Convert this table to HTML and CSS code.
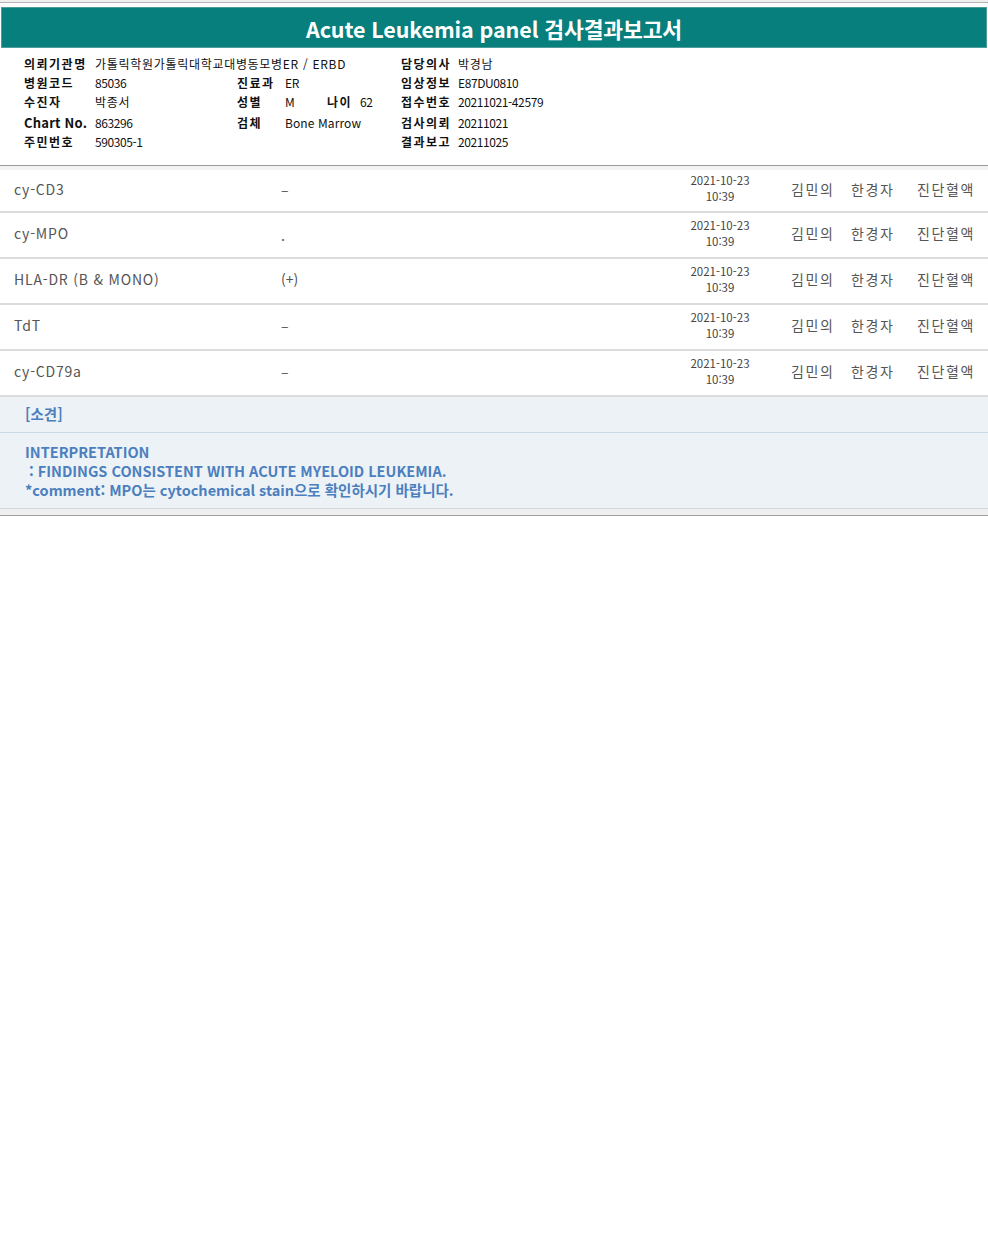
FILE: index.html
```html
<!DOCTYPE html>
<html lang="ko">
<head>
<meta charset="utf-8">
<title>Acute Leukemia panel 검사결과보고서</title>
<link rel="stylesheet" href="styles.css">
</head>
<body>
<div class="page">
  <div class="topbar"></div>
  <div class="title-wrap">
    <h1 class="title">Acute Leukemia panel 검사결과보고서</h1>
  </div>

  <div class="info">
    <div class="lbl">의뢰기관명</div>
    <div class="val nowrap">가톨릭학원가톨릭대학교대병동모병ER / ERBD</div>
    <div class="lbl"></div>
    <div class="val"></div>
    <div class="lbl">담당의사</div>
    <div class="val">박경남</div>

    <div class="lbl">병원코드</div>
    <div class="val num">85036</div>
    <div class="lbl">진료과</div>
    <div class="val num">ER</div>
    <div class="lbl">임상정보</div>
    <div class="val num">E87DU0810</div>

    <div class="lbl">수진자</div>
    <div class="val">박종서</div>
    <div class="lbl">성별</div>
    <div class="val age"><span class="sex">M</span><span class="lbl-inline">나이</span><span class="num">62</span></div>
    <div class="lbl">접수번호</div>
    <div class="val num">20211021-42579</div>

    <div class="lbl chart">Chart No.</div>
    <div class="val num">863296</div>
    <div class="lbl">검체</div>
    <div class="val num wide">Bone Marrow</div>
    <div class="lbl">검사의뢰</div>
    <div class="val num">20211021</div>

    <div class="lbl">주민번호</div>
    <div class="val num">590305-1</div>
    <div class="lbl"></div>
    <div class="val"></div>
    <div class="lbl">결과보고</div>
    <div class="val num">20211025</div>
  </div>

  <div class="results">
    <div class="row first">
      <div class="c-name">cy-CD3</div>
      <div class="c-val">–</div>
      <div class="c-date">2021-10-23<br>10:39</div>
      <div></div>
      <div class="c-p">김민의</div>
      <div class="c-p">한경자</div>
      <div class="c-p">진단혈액</div>
    </div>
    <div class="row">
      <div class="c-name">cy-MPO</div>
      <div class="c-val dot">.</div>
      <div class="c-date">2021-10-23<br>10:39</div>
      <div></div>
      <div class="c-p">김민의</div>
      <div class="c-p">한경자</div>
      <div class="c-p">진단혈액</div>
    </div>
    <div class="row">
      <div class="c-name">HLA-DR (B &amp; MONO)</div>
      <div class="c-val">(+)</div>
      <div class="c-date">2021-10-23<br>10:39</div>
      <div></div>
      <div class="c-p">김민의</div>
      <div class="c-p">한경자</div>
      <div class="c-p">진단혈액</div>
    </div>
    <div class="row">
      <div class="c-name">TdT</div>
      <div class="c-val">–</div>
      <div class="c-date">2021-10-23<br>10:39</div>
      <div></div>
      <div class="c-p">김민의</div>
      <div class="c-p">한경자</div>
      <div class="c-p">진단혈액</div>
    </div>
    <div class="row">
      <div class="c-name">cy-CD79a</div>
      <div class="c-val">–</div>
      <div class="c-date">2021-10-23<br>10:39</div>
      <div></div>
      <div class="c-p">김민의</div>
      <div class="c-p">한경자</div>
      <div class="c-p">진단혈액</div>
    </div>
  </div>

  <div class="opinion">
    <div class="op-head">[소견]</div>
    <div class="op-body">
      INTERPRETATION<br>
      &nbsp;: FINDINGS CONSISTENT WITH ACUTE MYELOID LEUKEMIA.<br>
      *comment: MPO는 cytochemical stain으로 확인하시기 바랍니다.
    </div>
  </div>
  <div class="bottom"></div>
</div>
</body>
</html>
```

FILE: styles.css
```css
html, body {
  margin: 0;
  padding: 0;
  background: #fff;
}
body {
  font-family: "Noto Sans CJK KR", "Noto Sans", sans-serif;
}
.page {
  width: 988px;
}
.topbar {
  height: 2px;
  background: #efefef;
  border-bottom: 1px solid #b4b4b4;
  margin-bottom: 4px;
}
.title-wrap {
  margin: 0 1px;
  height: 39px;
  background: #077f7c;
  border: 1px solid #4f9d9a;
  display: flex;
  align-items: center;
  justify-content: center;
}
.title {
  margin: 0;
  color: #fff;
  font-size: 21.5px;
  font-weight: 700;
  letter-spacing: -0.1px;
  line-height: 1;
  padding-top: 3px;
}
.info {
  display: grid;
  grid-template-columns: 71px 142px 48px 116px 57px 1fr;
  grid-template-rows: 19px 19px 19px 21px 19px;
  padding: 5px 0 15px 24px;
  font-size: 12px;
  color: #111;
  align-items: end;
  border-bottom: 1px solid #9a9a9a;
}
.info > div {
  line-height: 17px;
  white-space: nowrap;
}
.lbl {
  font-weight: 700;
  letter-spacing: 1.5px;
}
.lbl.chart {
  font-size: 13px;
  letter-spacing: 0.2px;
}
.val {
  letter-spacing: 0.7px;
}
.val.num,
.num {
  letter-spacing: -0.4px;
}
.val.num.wide {
  letter-spacing: 0.1px;
}
.age {
  display: flex;
}
.sex {
  width: 42px;
}
.lbl-inline {
  font-weight: 700;
  width: 33px;
  letter-spacing: 1.5px;
}
.results {
  border-top: 4px solid #f3f3f3;
}
.row {
  display: grid;
  grid-template-columns: 281px 399px 80px 31px 60px 66px 1fr;
  align-items: center;
  height: 44px;
  border-bottom: 2px solid #dcdcdc;
  color: #555;
  font-size: 14px;
}
.row.first {
  height: 41px;
}
.c-name {
  padding-left: 14px;
  letter-spacing: 0.8px;
  padding-bottom: 4px;
}
.c-val {
  padding-bottom: 4px;
}
.c-val.dot {
  padding-bottom: 0;
}
.c-date {
  font-size: 11.5px;
  line-height: 16px;
  text-align: center;
  color: #444;
  padding-bottom: 5px;
}
.c-p {
  letter-spacing: 1.6px;
  font-size: 14px;
  padding-bottom: 4px;
}
.opinion {
  background: #edf2f7;
  color: #4b7fbe;
  font-weight: 700;
  font-size: 14.5px;
  border-bottom: 1px solid #d6d6d6;
}
.op-head {
  height: 35px;
  line-height: 33px;
  padding-left: 25px;
  border-bottom: 1px solid #c9d7e6;
}
.op-body {
  padding: 9px 0 9px 25px;
  line-height: 19px;
}
.bottom {
  height: 6px;
  background: #efefef;
  border-bottom: 1px solid #a0a0a0;
}
```
